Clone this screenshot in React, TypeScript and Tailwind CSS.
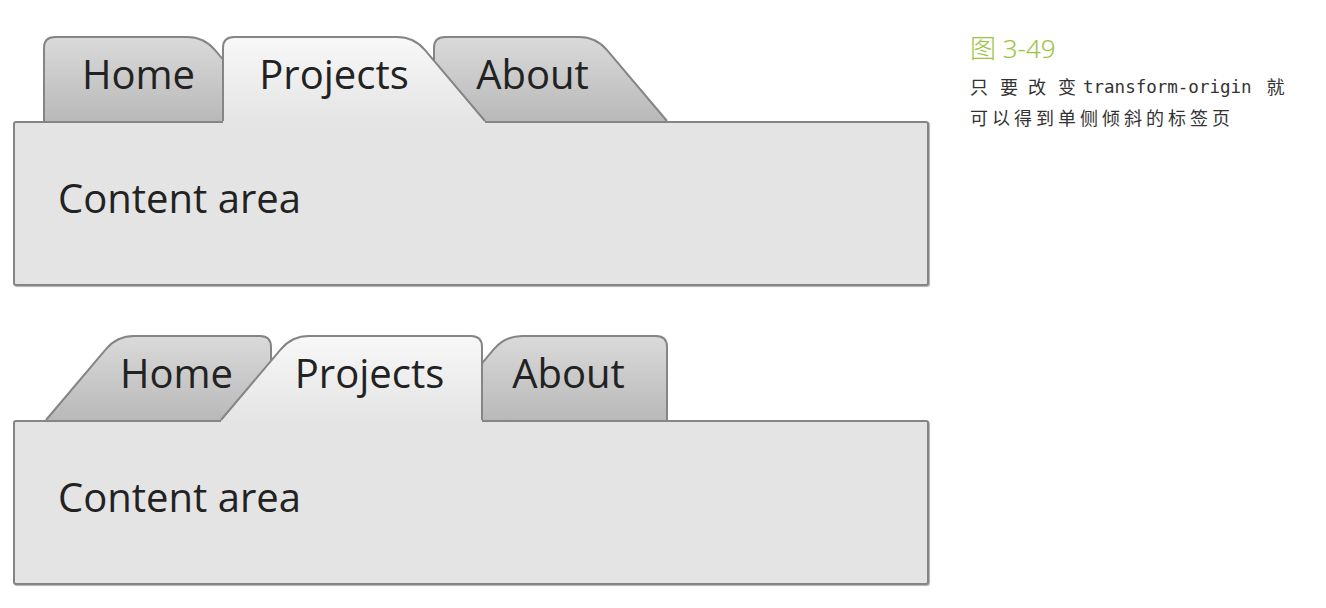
import { useId } from "react";

type Tab = { label: string; width: number; ml: number; shift?: number; active?: boolean };

const H = 85;
const HALF = 36;

function TabShape({ width, active, slant }: { width: number; active?: boolean; slant: "left" | "right" }) {
  const id = useId();
  const W = width + HALF;
  const top = width - HALF;
  const r = 11;
  const c = 17;
  const stroke = `M1,${H} L1,${1 + r} Q1,1 ${1 + r},1 L${top - c},1 Q${top},1 ${top + c * 0.65},${1 + c * 0.77} L${W - 1},${H}`;
  const fill = `${stroke} L${W - 1},${H + 2} L1,${H + 2} Z`;
  return (
    <svg
      className={`absolute top-0 ${slant === "right" ? "left-0" : "-left-[36px]"}`}
      width={W}
      height={H + 3}
      viewBox={`0 0 ${W} ${H + 3}`}
    >
      <defs>
        <linearGradient id={id} x1="0" y1="0" x2="0" y2="1">
          {active ? (
            <>
              <stop offset="0" stopColor="#f8f8f8" />
              <stop offset="1" stopColor="#e4e4e4" />
            </>
          ) : (
            <>
              <stop offset="0" stopColor="#dadada" />
              <stop offset="1" stopColor="#b8b8b8" />
            </>
          )}
        </linearGradient>
      </defs>
      <g transform={slant === "left" ? `translate(${W},0) scale(-1,1)` : undefined}>
        <path d={fill} fill={`url(#${id})`} />
        <path d={stroke} fill="none" stroke="#858585" strokeWidth={2} strokeLinejoin="round" />
      </g>
    </svg>
  );
}

function TabFigure({ tabs, slant }: { tabs: Tab[]; slant: "left" | "right" }) {
  return (
    <div className="flex flex-col">
      <div className="flex h-[85px]">
        {tabs.map((tab) => (
          <div
            key={tab.label}
            className={`relative h-[85px] shrink-0 ${tab.active ? "z-10" : ""}`}
            style={{ width: tab.width, marginLeft: tab.ml }}
          >
            <TabShape width={tab.width} active={tab.active} slant={slant} />
            <div
              className="relative pt-[8px] text-center text-[40px] font-medium leading-normal text-[#222]"
              style={{ left: tab.shift ?? 0 }}
            >
              {tab.label}
            </div>
          </div>
        ))}
      </div>
      <div className="relative h-[165px] rounded-[3px] border-2 border-[#858585] bg-[#e4e4e4] pl-[43px] pt-[45px] shadow-[1px_1px_1px_rgba(0,0,0,0.3)]">
        <div className="text-[40px] font-medium leading-normal text-[#222]">Content area</div>
      </div>
    </div>
  );
}

export default function App() {
  const topTabs: Tab[] = [
    { label: "Home", width: 197, ml: 30, shift: -3 },
    { label: "Projects", width: 228, ml: -18, shift: -2, active: true },
    { label: "About", width: 199, ml: -17 },
  ];
  const bottomTabs: Tab[] = [
    { label: "Home", width: 191, ml: 68 },
    { label: "Projects", width: 227, ml: -16, active: true },
    { label: "About", width: 199, ml: -14 },
  ];

  return (
    <div className="flex h-[608px] w-[1326px] bg-white" style={{ fontFamily: '"Open Sans", sans-serif' }}>
      <div className="flex w-[929px] flex-col gap-[49px] pl-[13px] pt-[36px]">
        <TabFigure tabs={topTabs} slant="right" />
        <TabFigure tabs={bottomTabs} slant="left" />
      </div>

      <div className="ml-[41px] flex flex-col pt-[31px] font-['Noto_Sans','Noto_Sans_CJK_SC',sans-serif] text-[#333]">
        <div className="text-[26px] font-light leading-[34px] text-[#9ac43c]">图 3-49</div>
        <div className="mt-[7px] flex items-center text-[18px] leading-[31px]">
          <span>只</span>
          <span className="ml-[12px]">要</span>
          <span className="ml-[10px]">改</span>
          <span className="ml-[12px]">变</span>
          <span className="ml-[7px] font-['DejaVu_Sans_Mono',monospace] text-[17.5px]">transform-origin</span>
          <span className="ml-[15px]">就</span>
        </div>
        <div className="text-[18px] leading-[31px] tracking-[4px]">可以得到单侧倾斜的标签页</div>
      </div>
    </div>
  );
}
